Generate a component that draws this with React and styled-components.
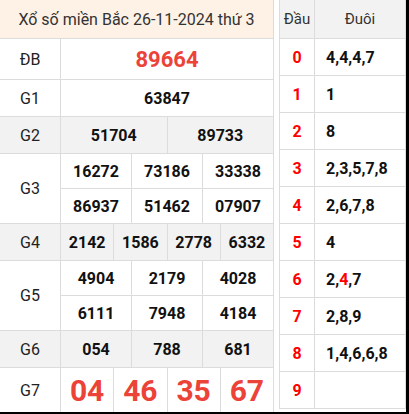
import React from 'react';
import styled, { createGlobalStyle } from 'styled-components';

const GlobalStyle = createGlobalStyle`
    body {
        margin: 0;
        font-family: Roboto, "Liberation Sans", Arial, sans-serif;
        background: #fff;
    }
`;

const LINE = '#dcdcdc';

const Frame = styled.div`
    display: flex;
    gap: 5px;
    width: 409px;
    height: 414px;
    box-sizing: border-box;
    border-right: 3px solid #000;
    border-bottom: 2px solid #000;
    background: #fff;
    overflow: hidden;
`;

const ResultTable = styled.div`
    display: flex;
    flex-direction: column;
    width: 274px;
    flex: none;
    box-sizing: border-box;
    border-right: 1px solid ${LINE};
`;

const TitleRow = styled.div`
    display: flex;
    align-items: center;
    justify-content: center;
    height: 39px;
    box-sizing: border-box;
    border-bottom: 1px solid ${LINE};
    background: #fef1e6;
    color: #333;
    font-size: 16px;
`;

const PrizeRow = styled.div`
    display: flex;
    height: ${(p) => p.$h}px;
    box-sizing: border-box;
    border-bottom: ${(p) => (p.$last ? 'none' : `1px solid ${LINE}`)};
    background: ${(p) => (p.$alt ? '#f2f2f2' : '#fff')};
`;

const Label = styled.div`
    display: flex;
    align-items: center;
    justify-content: center;
    width: 60px;
    flex: none;
    border-right: 1px solid ${LINE};
    color: #222;
    font-size: 16px;
`;

const Numbers = styled.div`
    display: flex;
    flex-direction: column;
    flex: 1;
`;

const NumLine = styled.div`
    display: flex;
    flex: 1;
    border-bottom: ${(p) => (p.$sep ? `1px solid ${LINE}` : 'none')};
`;

const NumCell = styled.div`
    display: flex;
    align-items: center;
    justify-content: center;
    flex: 1;
    min-width: 0;
    border-left: ${(p) => (p.$first ? 'none' : `1px solid ${LINE}`)};
    color: ${(p) => (p.$red ? '#ec4339' : '#111')};
    font-size: ${(p) => p.$size || 16}px;
    font-weight: 700;
`;

const LotoTable = styled.div`
    display: flex;
    flex-direction: column;
    width: 127px;
    flex: none;
    box-sizing: border-box;
    border-left: 1px solid ${LINE};
    border-right: 1px solid ${LINE};
    align-self: flex-start;
`;

const LotoRow = styled.div`
    display: flex;
    height: ${(p) => (p.$head ? 39 : 37)}px;
    box-sizing: border-box;
    border-bottom: 1px solid ${LINE};
    background: ${(p) => (p.$head ? '#f2f2f2' : '#fff')};
`;

const Head = styled.div`
    display: flex;
    align-items: center;
    justify-content: center;
    width: 34px;
    flex: none;
    border-right: 1px solid ${LINE};
    color: ${(p) => (p.$title ? '#333' : '#f00')};
    font-size: ${(p) => (p.$title ? 15 : 16)}px;
    font-weight: ${(p) => (p.$title ? 400 : 700)};
`;

const Tail = styled.div`
    display: flex;
    align-items: center;
    justify-content: ${(p) => (p.$title ? 'center' : 'flex-start')};
    flex: 1;
    padding-left: ${(p) => (p.$title ? 0 : 11)}px;
    color: ${(p) => (p.$title ? '#333' : '#111')};
    font-size: ${(p) => (p.$title ? 15 : 16)}px;
    font-weight: ${(p) => (p.$title ? 400 : 700)};
`;

const Hot = styled.span`
    color: #f00;
`;

const prizes = [
  { label: 'ĐB', h: 41, lines: [['89664']], red: true, size: 22 },
  { label: 'G1', h: 37, lines: [['63847']] },
  { label: 'G2', h: 37, alt: true, lines: [['51704', '89733']] },
  {
    label: 'G3',
    h: 70,
    lines: [
      ['16272', '73186', '33338'],
      ['86937', '51462', '07907'],
    ],
  },
  { label: 'G4', h: 37, alt: true, lines: [['2142', '1586', '2778', '6332']] },
  {
    label: 'G5',
    h: 70,
    lines: [
      ['4904', '2179', '4028'],
      ['6111', '7948', '4184'],
    ],
  },
  { label: 'G6', h: 37, alt: true, lines: [['054', '788', '681']] },
  { label: 'G7', h: 44, last: true, lines: [['04', '46', '35', '67']], red: true, size: 30 },
];

const loto = [
  ['4', '4', '4', '7'],
  ['1'],
  ['8'],
  ['2', '3', '5', '7', '8'],
  ['2', '6', '7', '8'],
  ['4'],
  ['2', '*4', '7'],
  ['2', '8', '9'],
  ['1', '4', '6', '6', '8'],
  [],
];

const App = () => (
  <>
    <GlobalStyle />
    <Frame>
      <ResultTable>
        <TitleRow>Xổ số miền Bắc 26-11-2024 thứ 3</TitleRow>
        {prizes.map((p) => (
          <PrizeRow key={p.label} $h={p.h} $alt={p.alt} $last={p.last}>
            <Label>{p.label}</Label>
            <Numbers>
              {p.lines.map((line, i) => (
                <NumLine key={i} $sep={i < p.lines.length - 1}>
                  {line.map((n, j) => (
                    <NumCell key={j} $first={j === 0} $red={p.red} $size={p.size}>
                      {n}
                    </NumCell>
                  ))}
                </NumLine>
              ))}
            </Numbers>
          </PrizeRow>
        ))}
      </ResultTable>
      <LotoTable>
        <LotoRow $head>
          <Head $title>Đầu</Head>
          <Tail $title>Đuôi</Tail>
        </LotoRow>
        {loto.map((tails, i) => (
          <LotoRow key={i}>
            <Head>{i}</Head>
            <Tail>
              {tails.map((t, j) => (
                <React.Fragment key={j}>
                  {j > 0 && ','}
                  {t[0] === '*' ? <Hot>{t.slice(1)}</Hot> : t}
                </React.Fragment>
              ))}
            </Tail>
          </LotoRow>
        ))}
      </LotoTable>
    </Frame>
  </>
);

export default App;
